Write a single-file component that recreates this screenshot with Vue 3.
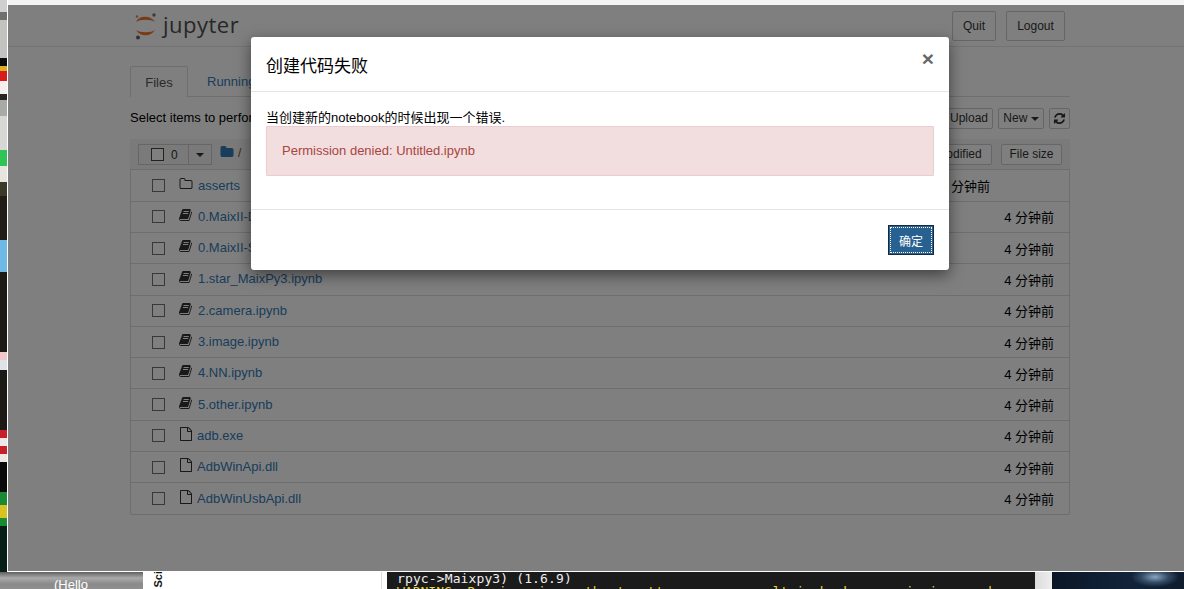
<script setup>
const bookPath = 'M1639 478q40 57 18 129l-275 906q-19 64-76.5 107.5t-122.5 43.5h-923q-77 0-148.5-53.5t-99.5-131.5q-24-67-2-127 0-4 3-27t4-37q1-8-3-21.5t-3-19.5q2-11 8-21t16.5-23.5 16.5-23.5q23-38 45-91.5t30-91.5q3-10 .5-30t-.5-28q3-11 17-28t17-23q21-36 42-92t25-90q1-9-2.5-32t.5-28q4-13 22-30.5t22-22.5q19-26 42.5-84.5t27.5-96.5q1-8-3-25.5t-2-26.5q2-8 9-18t18-23 17-21q8-12 16.5-30.5t15-35 16-36 19.5-32 26.5-23.5 36-11.5 47.5 5.5l-1 3q38-9 51-9h761q74 0 114 56t18 130l-274 906q-36 119-71.5 153.5t-128.5 34.5h-869q-27 0-38 15-11 16-1 43 24 70 144 70h923q29 0 56-15.5t35-41.5l300-987q7-22 5-57 38 15 59 43zm-1064 2q-4 13 2 22.5t20 9.5h608q13 0 25.5-9.5t16.5-22.5l21-64q4-13-2-22.5t-20-9.5h-608q-13 0-25.5 9.5t-16.5 22.5zm-83 256q-4 13 2 22.5t20 9.5h608q13 0 25.5-9.5t16.5-22.5l21-64q4-13-2-22.5t-20-9.5h-608q-13 0-25.5 9.5t-16.5 22.5z'
const folderOPath = 'M1600 1312v-704q0-40-28-68t-68-28h-704q-40 0-68-28t-28-68v-64q0-40-28-68t-68-28h-320q-40 0-68 28t-28 68v960q0 40 28 68t68 28h1216q40 0 68-28t28-68zm128-704v704q0 92-66 158t-158 66h-1216q-92 0-158-66t-66-158v-960q0-92 66-158t158-66h320q92 0 158 66t66 158v32h672q92 0 158 66t66 158z'
const folderPath = 'M1728 608v704q0 92-66 158t-158 66h-1216q-92 0-158-66t-66-158v-960q0-92 66-158t158-66h320q92 0 158 66t66 158v32h672q92 0 158 66t66 158z'
const filePath = 'M1596 380q28 28 48 76t20 88v1152q0 40-28 68t-68 28h-1344q-40 0-68-28t-28-68v-1600q0-40 28-68t68-28h896q40 0 88 20t76 48zm-444-244v376h376q-10-29-22-41l-313-313q-12-12-41-22zm384 1528v-1024h-416q-40 0-68-28t-28-68v-416h-768v1536h1280z'
const refreshPath = 'M1639 1056q0 5-1 7-64 268-268 434.5t-478 166.5q-146 0-282.5-55t-243.5-157l-129 129q-19 19-45 19t-45-19-19-45v-448q0-26 19-45t45-19h448q26 0 45 19t19 45-19 45l-137 137q71 66 161 102t187 36q134 0 250-65t186-179q11-17 53-117 8-23 30-23h192q13 0 22.5 9.5t9.5 22.5zm25-800v448q0 26-19 45t-45 19h-448q-26 0-45-19t-19-45 19-45l138-138q-148-137-349-137-134 0-250 65t-186 179q-11 17-53 117-8 23-30 23h-199q-13 0-22.5-9.5t-9.5-22.5v-7q65-268 270-434.5t480-166.5q146 0 284 55.5t245 156.5l130-129q19-19 45-19t45 19 19 45z'

const icons = { folder: folderOPath, book: bookPath, file: filePath }
const rows = [
  { name: 'asserts', icon: 'folder' },
  { name: '0.MaixII-Dock.ipynb', icon: 'book' },
  { name: '0.MaixII-S.ipynb', icon: 'book' },
  { name: '1.star_MaixPy3.ipynb', icon: 'book' },
  { name: '2.camera.ipynb', icon: 'book' },
  { name: '3.image.ipynb', icon: 'book' },
  { name: '4.NN.ipynb', icon: 'book' },
  { name: '5.other.ipynb', icon: 'book' },
  { name: 'adb.exe', icon: 'file' },
  { name: 'AdbWinApi.dll', icon: 'file' },
  { name: 'AdbWinUsbApi.dll', icon: 'file' },
]
</script>

<template>
  <div class="desktop">
    <div class="upper">
      <div class="strip"></div>
      <div class="window">
        <div class="chrome"></div>
        <div class="page">
          <header class="head">
            <div class="head-in">
              <div class="logo">
                <svg width="24" height="30" viewBox="0 0 24 30">
                  <path d="M2 11 C5 4 17 4 21 11 C17 8 6 8 2 11Z" fill="#f37626" />
                  <path d="M2 19 C6 26 17 26 21 19 C17 22 6 22 2 19Z" fill="#f37626" />
                  <circle cx="20" cy="4" r="1.7" fill="#767677" />
                  <circle cx="3" cy="5.5" r="1.2" fill="#989798" />
                  <circle cx="4" cy="26.5" r="2" fill="#616262" />
                </svg>
                <span class="wordmark">jupyter</span>
              </div>
              <div class="head-btns">
                <button class="btn quit">Quit</button>
                <button class="btn logout">Logout</button>
              </div>
            </div>
          </header>

          <main class="main">
            <nav class="tabs">
              <span class="tab active">Files</span>
              <span class="tab">Running</span>
            </nav>
            <div class="toolbar">
              <span class="hint">Select items to perform actions on them.</span>
              <div class="tools">
                <button class="btn small upload">Upload</button>
                <button class="btn small newb">New <i class="caret"></i></button>
                <button class="btn small refresh">
                  <svg width="13" height="13" viewBox="0 0 1792 1792"><path :d="refreshPath" fill="#333" /></svg>
                </button>
              </div>
            </div>
            <section class="list">
              <div class="list-head">
                <div class="group">
                  <span class="group-l"><i class="check dark"></i><span class="cnt">0</span></span>
                  <span class="group-r"><i class="caret"></i></span>
                </div>
                <svg class="crumb" width="14" height="14" viewBox="0 0 1792 1792"><path :d="folderPath" fill="#337ab7" /></svg>
                <span class="slash">/</span>
                <span class="grow"></span>
                <button class="btn small modified">Last Modified</button>
                <button class="btn small size">File size</button>
              </div>
              <div v-for="r in rows" :key="r.name" class="row" :class="{ dir: r.icon === 'folder' }">
                <i class="check"></i>
                <svg class="ricon" width="14" height="14" viewBox="0 0 1792 1792"><path :d="icons[r.icon]" fill="#333" /></svg>
                <a class="name" :class="{ plain: r.icon === 'file' }">{{ r.name }}</a>
                <span class="grow"></span>
                <span class="time">4 分钟前</span>
              </div>
            </section>
          </main>

          <div class="backdrop"></div>
          <div class="modal">
            <div class="m-head">
              <h4>创建代码失败</h4>
              <span class="close">×</span>
            </div>
            <div class="m-body">
              <p>当创建新的notebook的时候出现一个错误.</p>
              <div class="alert">Permission denied: Untitled.ipynb</div>
            </div>
            <div class="m-foot">
              <button class="ok"><span>确定</span></button>
            </div>
          </div>
        </div>
      </div>
    </div>
    <div class="lower">
      <div class="thumb"><span>(Hello</span></div>
      <div class="paper"><span class="sci">Sci</span></div>
      <div class="terminal">
        <div class="t1">rpyc-&gt;Maixpy3) (1.6.9)</div>
        <div class="t2">WARNING: Running pip as the 'root' user can result in broken permissions and</div>
      </div>
      <div class="gutter"></div>
      <div class="wall"></div>
    </div>
  </div>
</template>

<style>
html, body { margin: 0; padding: 0; background: #fff; }
</style>

<style scoped>
.desktop {
  width: 1184px;
  height: 589px;
  overflow: hidden;
  display: flex;
  flex-direction: column;
  font-family: "Liberation Sans", "Noto Sans CJK SC", sans-serif;
  font-size: 13px;
  color: #000;
}
.upper { display: flex; height: 572px; flex: none; }
.strip {
  width: 7px;
  flex: none;
  background: linear-gradient(180deg,
    #cfcfcf 0 12px, #6f6f6c 12px 20px, #c2c2c0 20px 58px, #0b0b0b 58px 66px, #d8b022 66px 71px,
    #d81c1c 71px 81px, #f3f0ee 81px 94px, #2a2420 94px 100px, #a9a9a5 100px 116px, #d7d7d3 116px 150px,
    #2fc456 150px 166px, #e6e6e0 166px 182px, #3b3a2a 182px 196px, #211c15 196px 240px, #6fb9e6 240px 272px,
    #1d1a16 272px 352px, #f2c9c9 352px 360px, #e0e2ea 360px 370px, #1b1a14 370px 430px, #c8202a 430px 438px,
    #efe6e6 438px 446px, #c8202a 446px 454px, #efe6e6 454px 462px, #0a0a0a 462px 492px, #1a8a35 492px 505px,
    #d8c320 505px 518px, #1a8a35 518px 526px, #062018 526px 572px);
}
.window {
  flex: 1;
  min-width: 0;
  border-left: 1px solid #fff;
  border-bottom: 1px solid #fff;
  display: flex;
  flex-direction: column;
  background: #fff;
}
.chrome { height: 5px; flex: none; background: #f4f4f4; }
.page { flex: 1; position: relative; background: #fff; overflow: hidden; }
.backdrop { position: absolute; inset: 0; background: rgba(0, 0, 0, .5); }

.head { height: 41px; border-bottom: 1px solid #e7e7e7; box-sizing: content-box; }
.head-in { margin-left: 122px; width: 935px; display: flex; justify-content: space-between; align-items: flex-start; }
.logo { display: flex; align-items: center; margin: 6px 0 0 4px; height: 30px; }
.wordmark { font-family: "Open Sans", sans-serif; font-size: 22px; color: #4e4e4e; margin: -4px 0 0 5px; letter-spacing: .5px; line-height: 30px; }
.head-btns { display: flex; gap: 10px; margin-top: 6px; }

.btn {
  font-family: inherit;
  font-size: 12px;
  background: #fff;
  border: 1px solid #ccc;
  border-radius: 2px;
  color: #333;
  padding: 0;
  height: 30px;
  box-sizing: border-box;
  line-height: 1;
}
.quit { width: 44px; }
.logout { width: 59px; }
.btn.small { height: 21px; padding-bottom: 1px; }

.main { margin-left: 122px; width: 940px; }
.tabs { display: flex; margin-top: 19px; height: 31px; border-bottom: 1px solid #ddd; box-sizing: border-box; }
.tab { height: 30px; line-height: 31px; padding: 0 15px; color: #337ab7; font-size: 13px; }
.tab.active {
  color: #555;
  border: 1px solid #ddd;
  border-bottom: 0;
  height: 31px;
  width: 58px;
  padding: 0;
  text-align: center;
  background: #fff;
  border-radius: 2px 2px 0 0;
  margin-right: 4px;
  box-sizing: border-box;
  line-height: 31px;
}
.toolbar { display: flex; justify-content: space-between; height: 42px; padding-top: 11px; box-sizing: border-box; }
.hint { line-height: 17px; font-size: 13px; color: #000; margin-top: 1px; }
.tools { display: flex; gap: 5px; }
.upload { width: 48px; }
.newb { width: 46px; }
.refresh { width: 21px; display: flex; align-items: center; justify-content: center; }

.list { border: 1px solid #ddd; border-top: 0; border-radius: 2px; }
.list-head { height: 31.4px; background: #f5f5f5; display: flex; align-items: flex-start; padding: 5px 8px 0 8px; box-sizing: border-box; margin: 0 -1px; border-bottom: 1px solid #ddd; }
.group { display: flex; border: 1px solid #ccc; height: 21px; width: 74px; box-sizing: border-box; background: #f5f5f5; }
.group-l { width: 50px; display: flex; align-items: center; border-right: 1px solid #ccc; padding-left: 12px; box-sizing: border-box; }
.group-r { width: 22px; display: flex; align-items: center; justify-content: center; }
.cnt { font-size: 12px; color: #333; margin-left: 7px; }
.crumb { margin: 1px 0 0 8px; }
.slash { margin: 0 0 0 4px; line-height: 18px; color: #555; font-size: 12px; }
.grow { flex: 1; }
.modified { width: 92px; margin-right: 9px; }
.size { width: 61px; }

.check { display: inline-block; width: 13px; height: 13px; box-sizing: border-box; border: 1px solid #707070; background: #fff; flex: none; }
.check.dark { border-color: #444; }
.caret { display: inline-block; width: 0; height: 0; border-left: 4px solid transparent; border-right: 4px solid transparent; border-top: 4px solid #333; vertical-align: middle; }

.row { height: 31.3px; display: flex; align-items: center; padding: 0 15px 0 21px; box-sizing: border-box; border-bottom: 1px solid #ddd; }
.row.dir { padding-right: 79px; }
.row:last-child { border-bottom: 0; height: 30.8px; }
.ricon { margin: -4px 0 0 14px; flex: none; }
.name { margin-left: 5px; color: #337ab7; font-size: 13px; margin-top: -1px; }
.name.plain { margin-left: 4px; }
.time { font-size: 13px; color: #000; }

.modal {
  position: absolute;
  left: 243px;
  top: 32px;
  width: 698px;
  height: 233px;
  background: #fff;
  border-radius: 3px;
  box-shadow: 0 5px 15px rgba(0, 0, 0, .5);
  display: flex;
  flex-direction: column;
}
.m-head { height: 55px; border-bottom: 1px solid #e5e5e5; padding: 0 15px; display: flex; justify-content: space-between; box-sizing: border-box; flex: none; }
.m-head h4 { margin: 19px 0 0; font-size: 17px; font-weight: 400; line-height: 22px; color: #000; }
.close { font-size: 21px; font-weight: 700; line-height: 21px; color: #000; opacity: .6; margin: 11px 0 0; font-family: "Liberation Sans", sans-serif; }
.m-body { height: 117px; padding: 17px 15px 0; box-sizing: border-box; flex: none; }
.m-body p { margin: 0; font-size: 13px; line-height: 17px; color: #000; }
.alert { margin-top: 0; height: 50px; border: 1px solid #ebccd1; background: #f2dede; color: #a94442; box-sizing: border-box; padding: 15px; line-height: 17px; font-size: 13px; border-radius: 1px; }
.m-foot { flex: 1; border-top: 1px solid #e5e5e5; display: flex; justify-content: flex-end; padding: 15px 15px 0; }
.ok { width: 46px; height: 30px; background: #286090; border: 1px solid #122b40; padding: 1px; color: #fff; font: inherit; font-size: 12px; box-sizing: border-box; }
.ok span { display: flex; align-items: center; justify-content: center; width: 100%; height: 100%; outline: 1px dotted #fff; outline-offset: -1px; }

.lower { flex: 1; display: flex; min-height: 0; }
.thumb {
  width: 143px;
  background: linear-gradient(180deg, #5f5f5f 0, #aaaaaa 6px, #8a8a8a 12px, #8f8f8f 17px);
  color: #fff;
  font-size: 13px;
  padding-left: 54px;
  box-sizing: border-box;
  line-height: 26px;
  overflow: hidden;
}
.paper { width: 239px; background: #fff; overflow: hidden; border-right: 1px solid #ddd; box-sizing: border-box; padding-left: 9px; }
.sci { display: block; writing-mode: vertical-rl; transform: rotate(180deg); font-size: 11px; font-weight: 700; color: #111; line-height: 12px; margin-top: -1px; width: 12px; }
.terminal {
  width: 648px;
  margin-left: 5px;
  background: #1b1b1b;
  overflow: hidden;
  padding-left: 10px;
  box-sizing: border-box;
  font-family: "DejaVu Sans Mono", monospace;
  font-size: 13px;
  line-height: 13px;
  white-space: nowrap;
}
.t1 { color: #eee; letter-spacing: .12px; }
.t2 { color: #e6d23a; }
.gutter { width: 17px; background: linear-gradient(90deg, #dcdcdc, #eeeeee); }
.wall { flex: 1; background: radial-gradient(ellipse 24px 10px at 103px 5px, #8aa5c2 0, rgba(90, 120, 150, .5) 55%, transparent 100%), linear-gradient(100deg, #0a1626 0, #12243a 60%, #0e1c2e 100%); }
</style>
